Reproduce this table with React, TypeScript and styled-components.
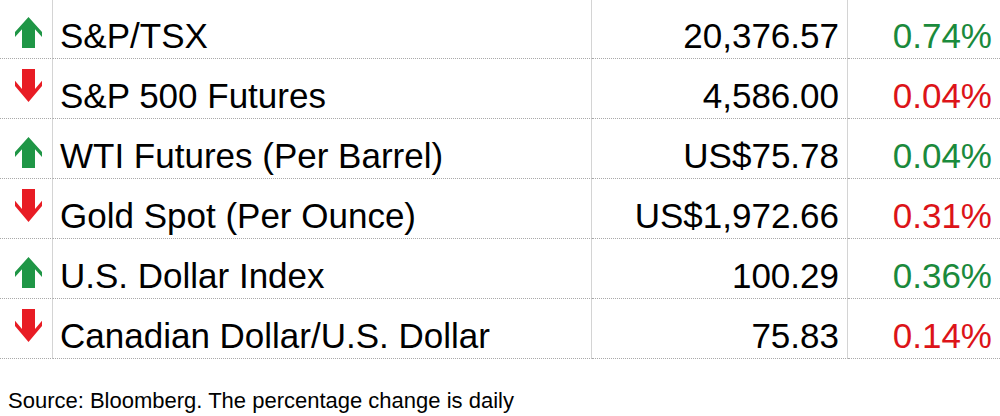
import React from 'react'
import styled, { createGlobalStyle } from 'styled-components'

const GlobalStyle = createGlobalStyle`
  html, body {
    margin: 0;
    padding: 0;
    background: #ffffff;
  }
  body {
    font-family: 'Liberation Sans', Arial, sans-serif;
    color: #000000;
  }
`

const Page = styled.div`
  width: 1000px;
  height: 416px;
  overflow: hidden;
  background: #ffffff;
`

const Table = styled.div`
  display: grid;
  grid-template-columns: 53px 539px 256px 152px;
  margin-top: -1px;
`

const Cell = styled.div<{ last?: boolean }>`
  box-sizing: border-box;
  height: 60px;
  border-bottom: 1px dotted #a9a9a9;
  border-right: ${({ last }) => (last ? 'none' : '1px solid #d4d4d4')};
  display: flex;
  align-items: flex-end;
  padding-bottom: 2px;
  font-size: 35px;
  line-height: 40px;
  white-space: nowrap;
`

const ArrowCell = styled(Cell)<{ up: boolean }>`
  align-items: flex-start;
  justify-content: flex-start;
  padding: ${({ up }) => (up ? '18px' : '10px')} 0 0 15px;
`

const NameCell = styled(Cell)`
  padding-left: 7px;
`

const ValueCell = styled(Cell)`
  justify-content: flex-end;
  padding-right: 8px;
`

const ChangeCell = styled(Cell)<{ up: boolean }>`
  justify-content: flex-end;
  padding-right: 8px;
  color: ${({ up }) => (up ? '#1b8a3c' : '#dc1419')};
`

const Source = styled.div`
  margin-top: 29px;
  padding-left: 8px;
  font-size: 22px;
  line-height: 25px;
`

const Arrow = ({ up }: { up: boolean }) => (
  <svg
    width="27"
    height={up ? 31 : 33}
    viewBox="0 0 27 31"
    preserveAspectRatio="none"
    style={up ? undefined : { transform: 'scaleY(-1)' }}
  >
    <path
      d="M13.5 0 L27 15 L27 20 L20 12.2 L20 31 L7 31 L7 12.2 L0 20 L0 15 Z"
      fill={up ? '#1f9646' : '#e81c24'}
    />
  </svg>
)

const rows = [
  { name: 'S&P/TSX', value: '20,376.57', change: '0.74%', up: true },
  { name: 'S&P 500 Futures', value: '4,586.00', change: '0.04%', up: false },
  { name: 'WTI Futures (Per Barrel)', value: 'US$75.78', change: '0.04%', up: true },
  { name: 'Gold Spot (Per Ounce)', value: 'US$1,972.66', change: '0.31%', up: false },
  { name: 'U.S. Dollar Index', value: '100.29', change: '0.36%', up: true },
  { name: 'Canadian Dollar/U.S. Dollar', value: '75.83', change: '0.14%', up: false },
]

export default function App() {
  return (
    <Page>
      <GlobalStyle />
      <Table>
        {rows.map((r) => (
          <React.Fragment key={r.name}>
            <ArrowCell up={r.up}>
              <Arrow up={r.up} />
            </ArrowCell>
            <NameCell>{r.name}</NameCell>
            <ValueCell>{r.value}</ValueCell>
            <ChangeCell up={r.up} last>
              {r.change}
            </ChangeCell>
          </React.Fragment>
        ))}
      </Table>
      <Source>Source: Bloomberg. The percentage change is daily</Source>
    </Page>
  )
}
